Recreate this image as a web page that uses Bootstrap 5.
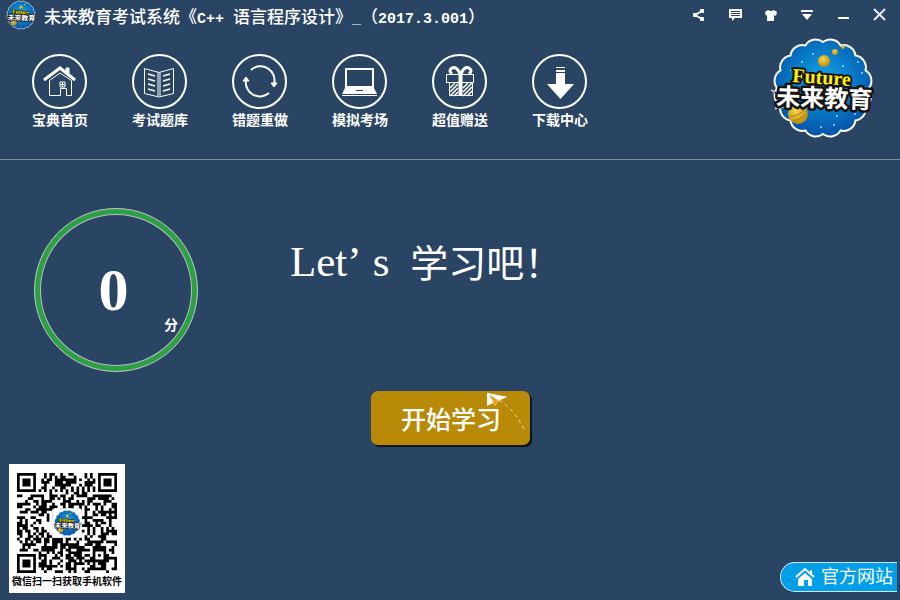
<!DOCTYPE html>
<html lang="zh-CN">
<head>
<meta charset="utf-8">
<meta name="viewport" content="width=device-width, initial-scale=1">
<title>未来教育考试系统</title>
<link href="https://cdn.jsdelivr.net/npm/bootstrap@5.3.0/dist/css/bootstrap.min.css" rel="stylesheet">
<style>
  body { background: #2a4563; color: #fff; font-family: "Liberation Sans", "Noto Sans CJK SC", sans-serif; }
  button, a { font-family: inherit; }
  .title-bar { padding: 0 3px 0 6px; height: 32px; }
  .title-logo { width: 30px; height: 30px; margin-right: 8px; }
  .app-title { font: 500 17px/24px "Noto Sans CJK SC", sans-serif; margin: 4px 0 0; white-space: nowrap; }
  .app-title span { font: bold 15px/24px "Liberation Mono", monospace; white-space: pre; }
  .win-btn { width: 36px; height: 30px; padding: 0; border: 0; background: none; color: #fff; }
  .win-btn svg, .tool-btn svg { display: block; margin: 0 auto; }
  .tool-bar { padding: 5px 25px 20px 10px; border-bottom: 1px solid #7e8c9c; }
  .tool-list { padding-top: 17px; }
  .tool-btn { width: 100px; padding: 0; border: 0; background: none; color: #fff; font-size: 14px; line-height: 20px; font-weight: 700; }
  .main-logo { width: 104px; height: 102px; }
  .study { padding: 48px 34px 0; gap: 92px; }
  .score { width: 164px; height: 164px; border: 1px solid #b9c9bf; border-radius: 50%; box-shadow: inset 0 0 0 5px #2ca141, inset 0 0 0 6px #b9b9cc; }
  .score-num { font: bold 60px/60px "Liberation Serif", serif; padding-right: 5px; }
  .score-unit { right: 19px; bottom: 36px; font-size: 14px; line-height: 20px; font-weight: 700; }
  .greeting { font: 38px/56px "Noto Sans CJK SC", sans-serif; margin: 25px 0 0; gap: 21px; }
  .greeting .latin { font: 43px/58px "Liberation Serif", serif; gap: 11px; }
  .start-btn { width: 159px; height: 54px; margin-top: 19px; padding: 3px 0 0 2px; border: 0; border-radius: 7px; background: #b88a07; color: #fff; box-shadow: 2px 2px 1px #0c131b; font-size: 25px; line-height: 32px; font-weight: 500; }
  .plane { right: 0; top: 0; }
  .bottom-bar { padding: 16px 3px 7px 9px; }
  .qr-card { background: #fff; color: #000; width: 116px; padding: 9px 0 3px; }
  .qr-card figcaption { font-size: 10px; line-height: 17px; font-weight: 700; white-space: nowrap; }
  .site-link { height: 30px; margin-bottom: 1px; padding: 0 4px 0 14px; gap: 6px; background: #009fe8; color: #fff; border: 1px solid #cbeaf9; border-right: 0; border-radius: 15px 0 0 15px; font-size: 18px; line-height: 28px; text-decoration: none; }
  .site-link:hover { color: #fff; }
</style>
</head>
<body class="min-vh-100 d-flex flex-column">

<header>
  <div class="title-bar d-flex align-items-start">
    <svg class="title-logo flex-shrink-0" viewBox="0 0 104 102" role="img" aria-label="未来教育"><use href="#brand"/></svg>
    <h1 class="app-title">未来教育考试系统《<span>C++ </span>语言程序设计》<span>_</span>（<span>2017.3.001</span>）</h1>
    <div class="d-flex ms-auto">
      <button class="win-btn" aria-label="分享"><svg width="16" height="16" fill="#fff" stroke="#fff"><path d="M11 4L4 8l7 4" fill="none" stroke-width="2"/><path d="M9.500 2.500h3v3h-3zM2.500 6.500h3v3h-3zM9.500 10.500h3v3h-3z"/></svg></button>
      <button class="win-btn" aria-label="消息"><svg width="16" height="16"><path d="M2 2h13v9H8l-3 3v-3H2z" fill="#fff"/><path d="M4 4.500h9M4 6.500h9M4 8.500h9" stroke="#2a4563"/></svg></button>
      <button class="win-btn" aria-label="换肤"><svg width="16" height="16"><path d="M5 3q3 2 6 0l3 2-1 4-2-1v6H4V8L3 9 2 5z" fill="#fff"/></svg></button>
      <button class="win-btn" aria-label="菜单"><svg width="16" height="16" fill="#fff"><path d="M2 3h12v2H2zM3 7h10l-5 6z"/></svg></button>
      <button class="win-btn" aria-label="最小化"><svg width="16" height="16"><path d="M3 10h11v2H3z" fill="#fff"/></svg></button>
      <button class="win-btn" aria-label="关闭"><svg width="16" height="16"><path d="M3 2l11 11M14 2L3 13" stroke="#e3e8ee" stroke-width="2"/></svg></button>
    </div>
  </div>
  <div class="tool-bar d-flex justify-content-between align-items-start">
    <nav class="tool-list d-flex" aria-label="主菜单">
      <button class="tool-btn"><svg width="56" height="56" fill="none" stroke="#fff"><circle cx="27.500" cy="27.500" r="26.500" stroke-width="2"/><path d="M12 26L28 14l15 12" stroke-width="3"/><path d="M34 18v-4h3v7" fill="#fff"/><path d="M17.500 26.500v15h11v-7h6v7h5v-15L28 19z"/><path d="M28 28h5v5h-5zM30.500 28v5M28 30.500h5"/></svg>宝典首页</button>
      <button class="tool-btn"><svg width="56" height="56" fill="none" stroke="#fff"><circle cx="27.500" cy="27.500" r="26.500" stroke-width="2"/><path d="M12.500 14.500L27 18.500l14.500-4v25L27 43l-14.500-3.500zM26 19v23M28 19v23"/><path d="M16 20l7 2M16 25l7 2M16 30l7 2M16 35l7 2M31 22l7-2M31 27l7-2M31 32l7-2M31 37l7-2" stroke-width="1.500"/></svg>考试题库</button>
      <button class="tool-btn"><svg width="56" height="56" fill="none" stroke="#fff"><circle cx="27.500" cy="27.500" r="26.500" stroke-width="2"/><path d="M19 16A14 14 0 0 1 42 30M37 39A14 14 0 0 1 14 26" stroke-width="2"/><path d="M39 29h6l-3 4zM11 27h6l-3-4z" fill="#fff" stroke-width="1"/></svg>错题重做</button>
      <button class="tool-btn"><svg width="56" height="56" fill="none" stroke="#fff"><circle cx="27.500" cy="27.500" r="26.500" stroke-width="2"/><path d="M14 15h27v18H14z" stroke-width="2"/><path d="M13 34h29l3 6H10z" fill="#fff" stroke="none"/><path d="M24 36.500h7" stroke="#2a4563"/><path d="M10 41.500h35"/></svg>模拟考场</button>
      <button class="tool-btn"><svg width="56" height="56" fill="none" stroke="#fff"><circle cx="27.500" cy="27.500" r="26.500" stroke-width="2"/><path d="M14.500 20.500h27v8h-27zM17.500 28.500h23v13h-23z"/><path d="M28 20q-3-8-8-6-4 3 0 6M29 20q3-8 8-6 4 3 0 6" stroke-width="3"/><path d="M28.500 19v23" stroke-width="4"/><path d="M18 34l5-5M18 38l8-8M18 42l8-8M22 42l4-4M31 34l5-5M31 38l9-9M31 42l9-9M35 42l5-5" stroke-width="1.500"/></svg>超值赠送</button>
      <button class="tool-btn"><svg width="56" height="56" fill="#fff"><circle cx="27.500" cy="27.500" r="26.500" fill="none" stroke="#fff" stroke-width="2"/><path d="M24 13h9v1h-9zM24 16h9v2h-9zM24 19h9v11h9L28.500 45 15 30h9z"/></svg>下载中心</button>
    </nav>
    <svg class="main-logo flex-shrink-0" viewBox="0 0 104 102" overflow="visible" role="img" aria-label="Future 未来教育">
      <defs>
        <radialGradient id="sky" cx=".5" cy=".42" r=".6"><stop offset="0" stop-color="#19a5e6"/><stop offset=".5" stop-color="#087bc9"/><stop offset="1" stop-color="#0650a5"/></radialGradient>
        <radialGradient id="gold" cx=".4" cy=".35" r=".7"><stop offset="0" stop-color="#f5d84c"/><stop offset="1" stop-color="#ba850a"/></radialGradient>
      </defs>
      <g id="brand">
        <path d="M98 51A12 12 0 0 1 94.500 68.600A12 12 0 0 1 84.500 83.500A12 12 0 0 1 69.600 93.500A12 12 0 0 1 52 97A12 12 0 0 1 34.400 93.500A12 12 0 0 1 19.500 83.500A12 12 0 0 1 9.500 68.600A12 12 0 0 1 6 51A12 12 0 0 1 9.500 33.400A12 12 0 0 1 19.500 18.500A12 12 0 0 1 34.400 8.500A12 12 0 0 1 52 5A12 12 0 0 1 69.600 8.500A12 12 0 0 1 84.500 18.500A12 12 0 0 1 94.500 33.400A12 12 0 0 1 98 51Z" fill="url(#sky)" stroke="#fff" stroke-width="2"/>
        <g fill="#9fdcf8"><circle cx="42" cy="17" r="1"/><circle cx="31" cy="25" r="1"/><circle cx="20" cy="33" r="1"/><circle cx="72" cy="29" r="1"/><circle cx="87" cy="25" r="1"/><circle cx="91" cy="36" r="1"/><circle cx="50" cy="90" r="1"/><circle cx="63" cy="88" r="1"/><circle cx="66" cy="79" r="1"/><circle cx="84" cy="77" r="1"/></g>
        <circle cx="53" cy="24" r="6" fill="url(#gold)"/><circle cx="64" cy="15" r="3" fill="url(#gold)"/><circle cx="72" cy="10" r="2" fill="url(#gold)"/>
        <circle cx="27" cy="77" r="10" fill="url(#gold)"/><path d="M19 79q8 1 15-7M22 84q7-1 12-6" fill="none" stroke="#b27e08" stroke-width="1"/>
        <path d="M0 53l8 3-4 4 5 4-5 8 14-3z" fill="#171313" stroke="#dbe5ee" stroke-width="1"/>
        <g stroke="#171313" stroke-linejoin="round" paint-order="stroke" font-weight="bold">
          <text transform="rotate(4 21 45)" x="21" y="45" font-family="Liberation Serif, serif" font-size="20" fill="#fff200" stroke-width="4">Future</text>
          <text transform="rotate(2 5 68)" x="5" y="68" font-family="Noto Sans CJK SC, sans-serif" font-size="24" fill="#fff" stroke-width="5">未来教育</text>
        </g>
      </g>
    </svg>
  </div>
</header>

<main>
  <section class="study d-flex align-items-start">
    <div class="score position-relative d-flex flex-shrink-0 align-items-center justify-content-center">
      <span class="score-num">0</span><span class="score-unit position-absolute">分</span>
    </div>
    <h2 class="greeting d-flex"><span class="latin d-flex"><span>Let’</span><span>s</span></span><span>学习吧！</span></h2>
  </section>
  <div class="text-center">
    <button class="start-btn position-relative">开始学习
      <svg class="plane position-absolute" width="46" height="44" aria-hidden="true"><path d="M3 2l20 4-9 4-3 5-2-3-6 3z" fill="#fff"/><path d="M5 3l6 12 3-6" fill="#e99d10"/><path d="M3 2l20 4-9 3zM3 2l6 8-6 4z" fill="#fff"/><path d="M15 9q15 9 26 31" fill="none" stroke="#eadb9c" stroke-dasharray="4 3"/></svg>
    </button>
  </div>
</main>

<footer class="bottom-bar mt-auto d-flex justify-content-between align-items-end">
  <figure class="qr-card text-center m-0">
    <svg class="d-block mx-auto" width="100" height="100" viewBox="0 0 37 37" role="img" aria-label="二维码">
      <path id="qrModules" fill="#000"/>
      <rect x="13" y="13" width="11" height="11" rx="1" fill="#fff"/>
      <use href="#brand" transform="translate(13.500 13.500) scale(.098)"/>
    </svg>
    <figcaption>微信扫一扫获取手机软件</figcaption>
  </figure>
  <a class="site-link d-flex align-items-center" href="#"><svg width="20" height="20" aria-hidden="true"><path d="M1 10l9-8 9 8" fill="none" stroke="#fff" stroke-width="2"/><path d="M15 3h2v5h-2zM10 6l7 6v7h-4v-6H9v6H3v-7z" fill="#fff"/></svg>官方网站</a>
</footer>

<script src="https://cdn.jsdelivr.net/npm/bootstrap@5.3.0/dist/js/bootstrap.bundle.min.js"></script>
<script>
  // Draws a 37-module code: finder squares, timing lines, alignment square, data field.
  const size = 37;
  const square = (x, y, cx, cy) => Math.max(Math.abs(x - cx), Math.abs(y - cy));
  let seed = 20173, d = '';
  for (let y = 0; y < size; y++) {
    for (let x = 0; x < size; x++) {
      seed = (seed * 48271) % 2147483647;
      let dark = seed / 2147483647 < 0.52;
      if (x === 6 || y === 6) dark = (x + y) % 2 === 0;
      const align = square(x, y, 30, 30);
      if (align < 3) dark = align !== 1;
      for (const [cx, cy] of [[3, 3], [33, 3], [3, 33]]) {
        const r = square(x, y, cx, cy);
        if (r < 5) dark = r < 2 || r === 3;
      }
      if (dark) d += `M${x} ${y}h1v1h-1z`;
    }
  }
  document.getElementById('qrModules').setAttribute('d', d);
</script>
</body>
</html>
